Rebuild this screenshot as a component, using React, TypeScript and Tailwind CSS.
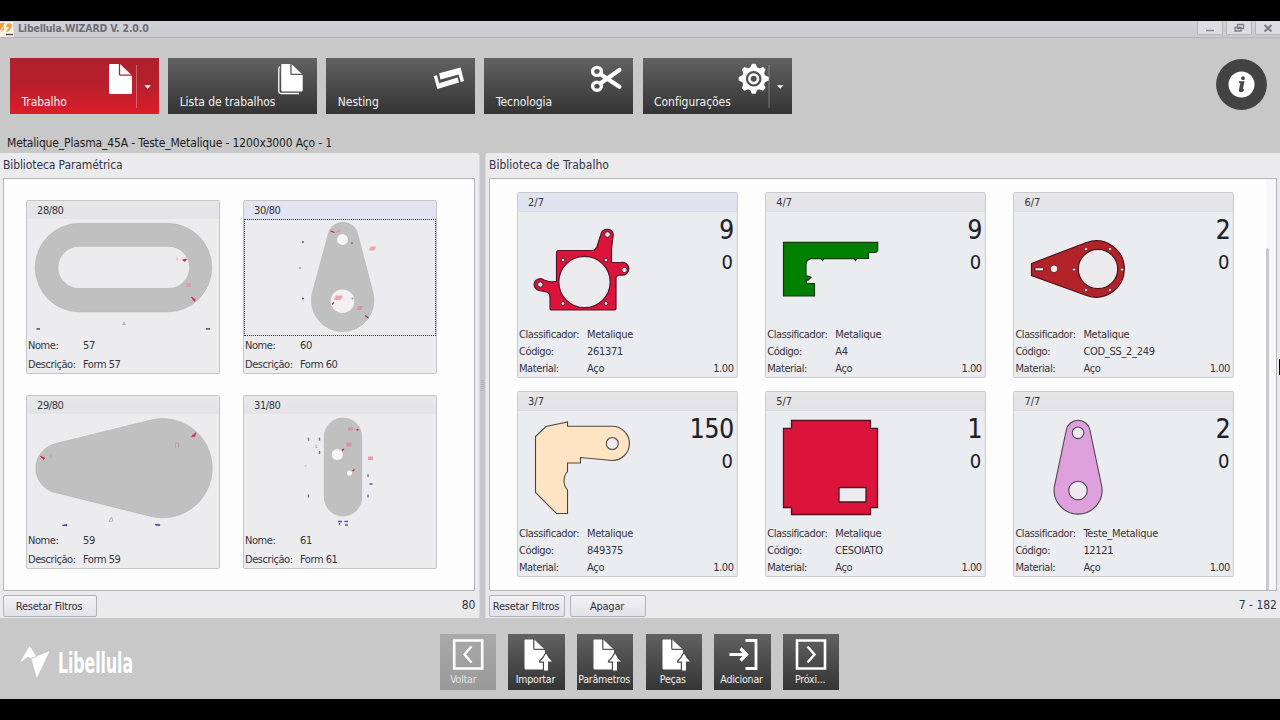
import type { ReactNode } from "react";

const DARK = "#4a4a4a";

function Doc({ x, y, w, h, gap }: { x: number; y: number; w: number; h: number; gap: string }) {
  const f = w * 0.5;
  const r = x + w;
  return (
    <g>
      <path
        d={`M${x + 1} ${y}H${r - f - 0.5}L${r} ${y + f}V${y + h - 1.5}Q${r} ${y + h} ${r - 1.5} ${y + h}H${x + 1.5}Q${x} ${y + h} ${x} ${y + h - 1.5}V${y + 1}Q${x} ${y} ${x + 1} ${y}Z`}
        fill="#fff"
      />
      <path d={`M${r - f - 1} ${y - 0.5}V${y + f - 1.5}Q${r - f - 1} ${y + f - 0.3} ${r - f} ${y + f - 0.3}H${r + 0.5}`} fill="none" stroke={gap} strokeWidth="1.3" />
    </g>
  );
}

function Split({ x }: { x: number }) {
  return (
    <g>
      <path d={`M${x} 7V50`} stroke="#fff" strokeOpacity=".3" strokeWidth="1" />
      <path d={`M${x + 8} 27.3h6.4l-3.2 3.4z`} fill="#fff" />
    </g>
  );
}

function TopButton({ label, red, children }: { label: string; red?: boolean; children: ReactNode }) {
  return (
    <button
      className={`grid h-[56px] w-[149px] bg-linear-to-b text-left ${
        red ? "from-[#ad202c] via-[#b81f2c] to-[#dc1d29]" : "from-[#626262] via-[#4b4b4b] to-[#343434]"
      }`}
    >
      <svg className="col-start-1 row-start-1" width="149" height="56" viewBox="0 0 149 56">
        {children}
      </svg>
      <span className="col-start-1 row-start-1 self-end pb-[4px] pl-[11.500px] text-[12px] leading-[15px] tracking-[-0.050px] text-[#f2f2f2]">{label}</span>
    </button>
  );
}

function GearShape() {
  return (
    <g transform="translate(110.7 20.8)">
      {[0, 45, 90, 135, 180, 225, 270, 315].map((a) => (
        <path key={a} d="M-4 -10L-1.8 -15H1.8L4 -10Z" fill="#fff" transform={`rotate(${a})`} />
      ))}
      <circle r="9.8" fill="none" stroke="#fff" strokeWidth="4" />
      <circle r="4.3" fill="none" stroke="#fff" strokeWidth="2.6" />
    </g>
  );
}

function Toolbar() {
  return (
    <header className="flex h-[82px] items-start justify-between bg-[#c8c8c8] pr-[13px] pl-[10px] pt-[20px]">
      <div className="flex gap-[9.150px]">
        <TopButton label="Trabalho" red>
          <Doc x={99} y={6} w={23} h={30} gap="#b81f2c" />
          <Split x={126.5} />
        </TopButton>
        <TopButton label="Lista de trabalhos">
          <path d="M112 9Q110.8 9 110.8 11V33Q110.8 35.5 113.5 35.5H131" fill="none" stroke="#fff" strokeWidth="1.3" />
          <Doc x={113.2} y={6} w={21.5} h={27.6} gap="#555" />
        </TopButton>
        <TopButton label="Nesting">
          <path d="M113.2 15.2L134.6 9.6L138 23L134.8 24L132.6 16.6L114.4 21.6Z" fill="#fff" />
          <path d="M107.7 18L110.9 17.2L113.2 25.2L131.6 19.6L132.9 24.4L111.4 31Z" fill="#fff" />
        </TopButton>
        <TopButton label="Tecnologia">
          <g fill="none" stroke="#fff">
            <ellipse cx="113" cy="13.4" rx="4.4" ry="4" strokeWidth="3.4" />
            <ellipse cx="113" cy="28.2" rx="4.4" ry="4" strokeWidth="3.4" />
            <path d="M116.500 16.200L123 20.500L135.400 28.800" strokeWidth="4.200" strokeLinecap="round" />
            <path d="M116.500 25.200L123 20.800L135.400 12" strokeWidth="4.200" strokeLinecap="round" />
          </g>
        </TopButton>
        <TopButton label="Configurações">
          <GearShape />
          <Split x={126} />
        </TopButton>
      </div>
      <svg className="mt-px" width="51" height="51" viewBox="0 0 51 51">
        <circle cx="25.5" cy="25.5" r="25.4" fill="#434343" />
        <circle cx="25.5" cy="25.5" r="13" fill="#fff" />
        <circle cx="27" cy="19.2" r="1.9" fill="#434343" />
        <path d="M23 23.2h4.4l-1.7 7.9h2.2M25.4 23.8l-1.6 7.2q-.2 1.2 1 1.1h2" fill="none" stroke="#434343" strokeWidth="1.8" />
      </svg>
    </header>
  );
}

type Param = { n: string; id: string; active?: boolean; box: string; art: ReactNode };

const params: Param[] = [
  {
    n: "28/80", id: "57", box: "27 219 192 116",
    art: (
      <>
        <path fillRule="evenodd" d="M79.500 223.300H167.500A44.300 44.300 0 0 1 167.500 311.900H79.500A44.300 44.300 0 0 1 79.500 223.300ZM79 246.300A21 21 0 0 0 79 288.500H168.500A21 21 0 0 0 168.500 246.300Z" fill="#c0c0c0" stroke="#b2b2b2" strokeWidth=".6" />
        <path d="M182.500 260l4-1-1.500 2.500zM191.500 297l3.500 2.500-.5 2z" fill="#d6204f" stroke="#d6204f" strokeWidth=".8" />
        <path d="M176.500 257v4l2-2zM186 283h5v4h-5z" fill="#e28fa0" opacity=".6" />
        <path d="M36.500 328.800h3.500M206 328.800h4" stroke="#30305e" strokeWidth="1.300" />
        <path d="M122 325l2-4 2 4z" fill="#bbb" />
      </>
    ),
  },
  {
    n: "30/80", id: "60", active: true, box: "244 218.500 192 116",
    art: (
      <>
        <path d="M328 234.500A15.200 15.200 0 0 1 358 234.500L373.200 293A31.300 31.300 0 1 1 312.100 293Z" fill="#c0c0c0" stroke="#b6b6b6" strokeWidth=".6" />
        <circle cx="342.500" cy="239" r="5.400" fill="#f5f5f7" />
        <circle cx="342.500" cy="300.700" r="11.800" fill="#f4eff2" />
        <path d="M335 232l3-2.500 3-.5-1 2-4 1.500zM334 299l2-4h7l-2.500 4.500h-5.500zM369 249.500l2-3.500h5l-1.500 4H369z" fill="#eb8c9b" opacity=".75" />
        <path d="M357 309l1-3.500h5l-1.500 4h-5z" fill="#dc7f8b" opacity=".6" />
        <path d="M330.500 230.500l4 1.500M365 315l3.500 2.500M332 304l2-2" stroke="#a72a4c" strokeWidth="1.200" />
        <circle cx="303" cy="241.500" r="1.100" fill="#666a88" /><circle cx="303" cy="298" r="1.100" fill="#555a80" />
        <circle cx="300" cy="267.500" r="1.300" fill="#b4b4bd" /><circle cx="352" cy="242.500" r="1" fill="#777" /><circle cx="352.500" cy="298" r="1" fill="#9a9aa0" />
      </>
    ),
  },
  {
    n: "29/80", id: "59", box: "27 414 192 116",
    art: (
      <>
        <path d="M56 443.500L150.500 420.100A49.600 49.600 0 1 1 150.500 516.300L58 493.200A25.200 25.200 0 0 1 56 443.500Z" fill="#c0c0c0" stroke="#b2b2b2" strokeWidth=".6" />
        <path d="M40 456l5 2-1.500 1.500zM191.500 436.500l4.500-4-1.500 4z" fill="#d6204f" stroke="#d6204f" strokeWidth=".6" />
        <path d="M175.500 443v4.500M178.500 443v4.500M175.500 443h3M51 454v4" stroke="#d78d97" fill="none" opacity=".8" />
        <path d="M62 525.300l5-1v1.600zM155 524.200l5 .2v1.200h-4z" fill="#30308a" stroke="#30308a" strokeWidth=".4" />
        <path d="M109 521.500l2.500-4.500 1.500 4z" fill="none" stroke="#b5b5b8" />
      </>
    ),
  },
  {
    n: "31/80", id: "61", box: "244 414 192 116",
    art: (
      <>
        <rect x="324.300" y="418" width="37.400" height="98" rx="18.700" fill="#c0c0c0" stroke="#b2b2b2" strokeWidth=".6" />
        <circle cx="337.300" cy="454.600" r="5.500" fill="#f5f5f6" /><circle cx="349.500" cy="473" r="2.600" fill="#f5f5f6" />
        <path d="M348 427.500h5v3h-5zM346.500 442.500h5v4h-5zM368 456.500h5v3.500h-5z" fill="#e07d90" opacity=".7" />
        <path d="M356.500 430l2-.5M342 450.500l2-1.500M352.500 471l2-1.500" stroke="#a72a4c" strokeWidth="1.500" />
        {[[308.500, 439.200], [319.500, 439.200], [319.500, 452.500], [308.500, 496], [368, 475.700], [368, 496]].map(([x, y]) => (
          <path key={`${x}-${y}`} d={`M${x} ${y - 1.500}v3`} stroke="#6d7098" strokeWidth="1.400" />
        ))}
        <path d="M316 444.500v3h1.500M304.500 466h2" fill="none" stroke="#a9a9b4" />
        <path d="M369.500 484h3M338 521.500h4M344.500 521.500h3.500M339.500 523v2M345 525h3" stroke="#5353a6" strokeWidth="1.300" />
      </>
    ),
  },
];

function ParamCard({ p }: { p: Param }) {
  return (
    <article className="flex h-[174px] w-[194px] flex-col rounded-[2px] border border-[#c5c5c8] bg-[#ececef] text-[11px] text-[#34343c]">
      <div className={`h-[18px] bg-linear-to-b pl-[10px] leading-[20px] tracking-[-0.400px] ${p.active ? "from-[#e4e4f0] to-[#dfe3f5]" : "from-[#e8e8ea] to-[#e4e4e6]"}`}>{p.n}</div>
      <div className={`h-[117px] ${p.active ? "outline-1 -outline-offset-1 outline-dotted outline-[#333]" : ""}`}>
        <svg width="192" height="116" viewBox={p.box}>{p.art}</svg>
      </div>
      <div className="flex h-[19px] pl-[1px] leading-[20px]">
        <span className="w-[55px] tracking-[-0.450px]">Nome:</span>
        <span className="tracking-[-0.400px]">{p.id}</span>
      </div>
      <div className="flex h-[18px] pl-[1px] leading-[20px]">
        <span className="w-[55px] tracking-[-0.450px]">Descrição:</span>
        <span className="tracking-[-0.450px]">Form {p.id}</span>
      </div>
    </article>
  );
}

type Job = { n: string; qty: string; cls: string; code: string; active?: boolean; box: string; art: ReactNode };

const jobs: Job[] = [
  {
    n: "2/7", qty: "9", cls: "Metalique", code: "261371", active: true, box: "518 211.500 113 112",
    art: (
      <g stroke="#55142a" strokeWidth="1.200">
        <path d="M558 250H592Q595.500 250 597 246L601.200 233A6.300 6.300 0 0 1 613.300 234L611.500 248V262H621A6.400 6.400 0 1 1 621 274.500Q616 274.500 616 278V307.500Q616 309.500 614 309.500H552Q550 309.500 550 307.500V297Q550 292.500 546.500 291.500L539 290A6 6 0 1 1 544 279.500Q550 282 554 281H556.500V252Q556.500 250 558 250Z" fill="#dc143c" />
        <circle cx="584.500" cy="281.500" r="25.700" fill="#ebebee" />
        <g fill="#f1e9ed" strokeWidth="1">
          <circle cx="607.500" cy="234" r="2.800" /><circle cx="624.500" cy="269.500" r="2.700" /><circle cx="540.300" cy="284" r="2.700" />
          <circle cx="563" cy="259.500" r="1.900" /><circle cx="606" cy="259.500" r="1.900" /><circle cx="563" cy="303" r="1.900" /><circle cx="606" cy="303" r="1.900" />
        </g>
      </g>
    ),
  },
  {
    n: "4/7", qty: "9", cls: "Metalique", code: "A4", box: "766 212 113 112",
    art: (
      <path d="M783.500 242.300H877.700V250.500L876 252.500H868.500V258.500H857L855.500 260.500L854 258.700H824L822.500 260.500L821 258.700H811Q806 259.500 806 265V275.500L811 277.300L808 280.200L806.500 279.500V283.500H814.500V296H783.500Z" fill="#008000" stroke="#14380f" strokeWidth="1.200" />
    ),
  },
  {
    n: "6/7", qty: "2", cls: "Metalique", code: "COD_SS_2_249", box: "1013.500 212 113 112",
    art: (
      <g stroke="#4f1218" strokeWidth="1.200">
        <path d="M1031 263.500L1086 242.500A28.200 28.200 0 1 1 1086 295.500L1031 275.500Z" fill="#b3232a" />
        <circle cx="1097.500" cy="269" r="19.700" fill="#ebebee" />
        <circle cx="1053.500" cy="268.800" r="3.800" fill="#f4eeee" strokeWidth=".8" />
        <rect x="1034.500" y="267.800" width="8.500" height="3" fill="#f4eeee" strokeWidth=".8" />
        <g fill="#f4eeee" strokeWidth=".6">
          <circle cx="1085.500" cy="249" r="1.500" /><circle cx="1109.500" cy="249" r="1.500" /><circle cx="1121.500" cy="269.500" r="1.500" />
          <circle cx="1109.500" cy="290" r="1.500" /><circle cx="1085.500" cy="290" r="1.500" /><circle cx="1073.500" cy="269.500" r="1.500" />
        </g>
      </g>
    ),
  },
  {
    n: "3/7", qty: "150", cls: "Metalique", code: "849375", box: "518 411 113 112",
    art: (
      <g stroke="#4e4840" strokeWidth="1.100">
        <path d="M546 426.500L567.500 422V426.300H612.300A17.100 17.100 0 1 1 612.300 460.500L580.500 457.500V463H567.500V471.500A14 14 0 0 0 567.500 490V513.500H556.500L535.500 492.500V436.500Z" fill="#ffe4c4" />
        <circle cx="612.300" cy="443.500" r="6" fill="#ecebee" />
      </g>
    ),
  },
  {
    n: "5/7", qty: "1", cls: "Metalique", code: "CESOIATO", box: "766 411 113 112",
    art: (
      <g stroke="#521123" strokeWidth="1.300">
        <path d="M791.500 420.500H870.500V428.300H877.500V507.500H870.500V514.500H791.500V507.500H783.500V428.300H791.500Z" fill="#dc143c" />
        <path d="M839 487.500H866V502H839Z" fill="#ecebee" />
      </g>
    ),
  },
  {
    n: "7/7", qty: "2", cls: "Teste_Metalique", code: "12121", box: "1014 411 113 112",
    art: (
      <g stroke="#50444f" strokeWidth="1.100">
        <path d="M1066.300 430A12 12 0 0 1 1089.900 430L1101.900 487A24 24 0 1 1 1054.300 487Z" fill="#dda0dd" />
        <circle cx="1078" cy="432.800" r="5.800" fill="#f1e7f3" /><circle cx="1078" cy="490.500" r="9.300" fill="#ede9f0" />
      </g>
    ),
  },
];

function Row({ k, v, end }: { k: string; v: string; end?: string }) {
  return (
    <div className="flex h-[17px] pr-[3.500px] pl-px leading-[17px]">
      <span className="w-[68px] tracking-[-0.420px]">{k}</span>
      <span className="flex-1 tracking-[-0.300px]">{v}</span>
      <span className="tracking-[-0.450px]">{end}</span>
    </div>
  );
}

function JobCard({ j }: { j: Job }) {
  return (
    <article className="flex h-[186px] w-[221px] flex-col rounded-[2px] border border-[#cacacd] bg-[#ebecef] text-[11px] text-[#34343c]">
      <div className={`h-[19px] border-b border-[#dedee2] bg-linear-to-b pl-[10px] leading-[20px] ${j.active ? "from-[#e3e5ee] to-[#dde1f0]" : "from-[#e7e7ea] to-[#e3e3e7]"}`}>{j.n}</div>
      <div className="flex h-[114px] justify-between pr-[3px]">
        <svg width="113" height="112" viewBox={j.box} preserveAspectRatio="xMinYMin meet">{j.art}</svg>
        <div className="flex flex-col items-end text-[#20202a]">
          <span className="mt-[2px] text-[26px] leading-[32px] tracking-[-0.150px] [-webkit-text-stroke:0.200px_#20202a]">{j.qty}</span>
          <span className="pr-[1px] text-[20px] leading-[32px]">0</span>
        </div>
      </div>
      <Row k="Classificador:" v={j.cls} />
      <Row k="Código:" v={j.code} />
      <Row k="Material:" v="Aço" end="1.00" />
    </article>
  );
}

function SmallButton({ label, cls }: { label: string; cls: string }) {
  return (
    <button className={`h-[22px] rounded-[2px] border border-[#b2b2ba] bg-linear-to-b from-[#f2f2f5] to-[#e2e2e9] pr-[2px] text-[11px] leading-[22px] tracking-[-0.250px] whitespace-nowrap text-[#30303a] ${cls}`}>{label}</button>
  );
}

function FootButton({ label, off, children }: { label: string; off?: boolean; children: ReactNode }) {
  return (
    <button className={`flex h-[56px] w-[56.500px] flex-col items-center overflow-hidden bg-linear-to-b ${off ? "from-[#a9a9a9] to-[#999]" : "from-[#626262] to-[#353535]"}`}>
      <svg className="shrink-0" width="56" height="38" viewBox="0 0 56 38">{children}</svg>
      <span className={`text-[10.500px] leading-[15px] tracking-[-0.200px] whitespace-nowrap ${off ? "pr-[9px] text-[#e4e4e4]" : "pr-[2px] text-[#f3f3f3]"}`}>{label}</span>
    </button>
  );
}

function UploadDoc() {
  return (
    <g>
      <Doc x={16.500} y={5.500} w={20.500} h={30} gap="#585858" />
      <path d="M38 19.500Q40 24 44 27.500H40V36.500H36V27.500H32Q36 24 38 19.500Z" fill="#fff" stroke={DARK} strokeWidth="2.400" strokeLinejoin="round" paintOrder="stroke" />
    </g>
  );
}

export default function App() {
  return (
    <div className="flex h-[720px] w-[1280px] flex-col overflow-hidden bg-black py-[21px] font-['DejaVu_Sans_Condensed','DejaVu_Sans',sans-serif] [font-stretch:condensed]">
      <div className="flex h-[17px] shrink-0 items-center border-b border-[#b4b4bc] bg-linear-to-b from-[#d2d2d8] to-[#c9c9d1]">
        <svg width="14" height="15" viewBox="0 0 14 15">
          <path d="M0 0H13L14 15H0Z" fill="#f8f2e8" />
          <path d="M0 1H5L1 8H0ZM7 2Q12 0 12 4L9 9L6 10L9 5L6 5ZM1 10L4 5V8Z" fill="#efa13c" />
          <path d="M6 12.500H13" stroke="#555" strokeWidth="1.500" />
        </svg>
        <span className="ml-[4px] flex-1 text-[10.500px] font-bold tracking-[-0.180px] text-[#6c6c76]">Libellula.WIZARD V. 2.0.0</span>
        <div className="flex h-[14px] gap-[3px] self-start">
          <div className="w-[26px] rounded-b-[2px] border border-t-0 border-[#b4b4bc] bg-[#dcdce1]"><svg width="24" height="13"><path d="M8 9.500h8" stroke="#85858c" strokeWidth="1.500" /></svg></div>
          <div className="w-[26px] rounded-b-[2px] border border-t-0 border-[#b4b4bc] bg-[#dcdce1]"><svg width="24" height="13"><path d="M10.500 3.500h6v4h-6zM8 6.500h6v3.500H8z" fill="#dcdce1" stroke="#7c7c83" strokeWidth="1.300" /></svg></div>
          <div className="w-[25px] rounded-bl-[2px] border border-t-0 border-r-0 border-[#b4b4bc] bg-[#dcdce1]"><svg width="23" height="13"><path d="M8.500 4l7 6.500M15.500 4l-7 6.500" stroke="#7c7c83" strokeWidth="2" /></svg></div>
        </div>
      </div>
      <Toolbar />
      <div className="h-[33px] shrink-0 bg-[#c8c8c8] pt-[15px] pl-[7px] text-[12px] leading-[17px] tracking-[-0.150px] text-[#1c1c1c]">
        Metalique_Plasma_45A - Teste_Metalique - 1200x3000 Aço - 1
      </div>

      <main className="flex h-[465px] shrink-0 bg-[#c6c6ca]">
        <section className="flex w-[480px] flex-col rounded-tr-[3px] border-r border-[#d8d8dc] bg-[#ebebee] pl-[3px]">
          <h2 className="h-[25px] text-[12px] leading-[24px] tracking-[-0.100px] text-[#34344a]">Biblioteca Paramétrica</h2>
          <div className="grid h-[413px] w-[472px] grid-flow-col grid-cols-[194px_194px] grid-rows-[174px_174px] gap-x-[23px] gap-y-[21px] border border-[#b4b4ba] bg-[#fdfdfe] pt-[21px] pl-[22px]">
            {[params[0], params[2], params[1], params[3]].map((p) => <ParamCard key={p.n} p={p} />)}
          </div>
          <div className="flex items-start justify-between pt-[4px] pr-[4px]">
            <SmallButton label="Resetar Filtros" cls="w-[94px]" />
            <span className="text-[12px] leading-[21px] tracking-[-0.300px] text-[#33333d]">80</span>
          </div>
        </section>
        <div className="flex w-[5px] flex-col items-center justify-center gap-px">
          {[0, 1, 2, 3, 4, 5].map((i) => <i key={i} className="h-px w-[3px] bg-[#b3b3b8]" />)}
        </div>
        <section className="flex w-[795px] flex-col rounded-tl-[3px] border-l border-[#dadade] bg-[#ebebee] pl-[3px]">
          <h2 className="h-[25px] text-[12px] leading-[24px] tracking-[0.020px] text-[#34344a]">Biblioteca de Trabalho</h2>
          <div className="flex h-[413px] w-[788px] justify-between border border-[#b4b4ba] bg-[#fdfdfe]">
            <div className="grid grid-cols-[221px_221px_221px] grid-rows-[186px_186px] gap-x-[27.200px] gap-y-[12.500px] pt-[13px] pl-[27px]">
              {jobs.map((j) => <JobCard key={j.n} j={j} />)}
            </div>
            <div className="flex w-[10px] bg-[#f7f7f9] pt-[69px]">
              <div className="h-full w-[3px] rounded-t bg-[#c9c9cd]" />
            </div>
          </div>
          <div className="flex items-start pt-[4px] pr-[3px]">
            <SmallButton label="Resetar Filtros" cls="w-[76px]" />
            <SmallButton label="Apagar" cls="ml-[5px] w-[76px]" />
            <span className="ml-auto text-[12px] leading-[21px] text-[#33333d]">7 - 182</span>
          </div>
        </section>
      </main>

      <footer className="flex h-[81px] shrink-0 bg-[#c8c8c8] pt-[16px] pl-[20px]">
        <div className="flex w-[419.500px] items-start gap-[8px]">
          <svg className="mt-[12px]" width="30" height="32" viewBox="0 0 30 32">
            <path d="M0 16.500L9.500 0L16.500 10.500L29.500 5L16.800 32L11.500 13L8.500 10.500Z" fill="#fff" />
            <path d="M11 12.500L16.800 10.300" stroke="#c8c8c8" strokeWidth="1" />
          </svg>
          <span className="mt-[12px] origin-left scale-x-[0.600] font-['Liberation_Sans_Narrow','DejaVu_Sans_Condensed',sans-serif] text-[29px] leading-[34px] font-bold text-white">Libellula</span>
        </div>
        <div className="flex gap-[12.200px]">
          <FootButton label="Voltar" off>
            <path d="M14.200 6.500H42.200V34.500H14.200Z" fill="none" stroke="#fff" strokeWidth="2.600" />
            <path d="M31.500 12.500L24.500 20.500L31.500 28.500" fill="none" stroke="#fff" strokeWidth="2.400" />
          </FootButton>
          <FootButton label="Importar"><UploadDoc /></FootButton>
          <FootButton label="Parâmetros"><UploadDoc /></FootButton>
          <FootButton label="Peças"><UploadDoc /></FootButton>
          <FootButton label="Adicionar">
            <path d="M30.500 6.500H41V34.500H30.500" fill="none" stroke="#fff" strokeWidth="2.800" />
            <path d="M14.500 20.500H31M25.500 14.500L31.500 20.500L25.500 26.500" fill="none" stroke="#fff" strokeWidth="3.200" />
          </FootButton>
          <FootButton label="Próxi...">
            <path d="M14 6.500H42V34.500H14Z" fill="none" stroke="#fff" strokeWidth="2.600" />
            <path d="M24.500 12.500L31.500 20.500L24.500 28.500" fill="none" stroke="#fff" strokeWidth="2.400" />
          </FootButton>
        </div>
      </footer>
      <div className="absolute top-[359px] left-[1278.500px] h-[16px] w-[1.500px] bg-black" />
    </div>
  );
}
